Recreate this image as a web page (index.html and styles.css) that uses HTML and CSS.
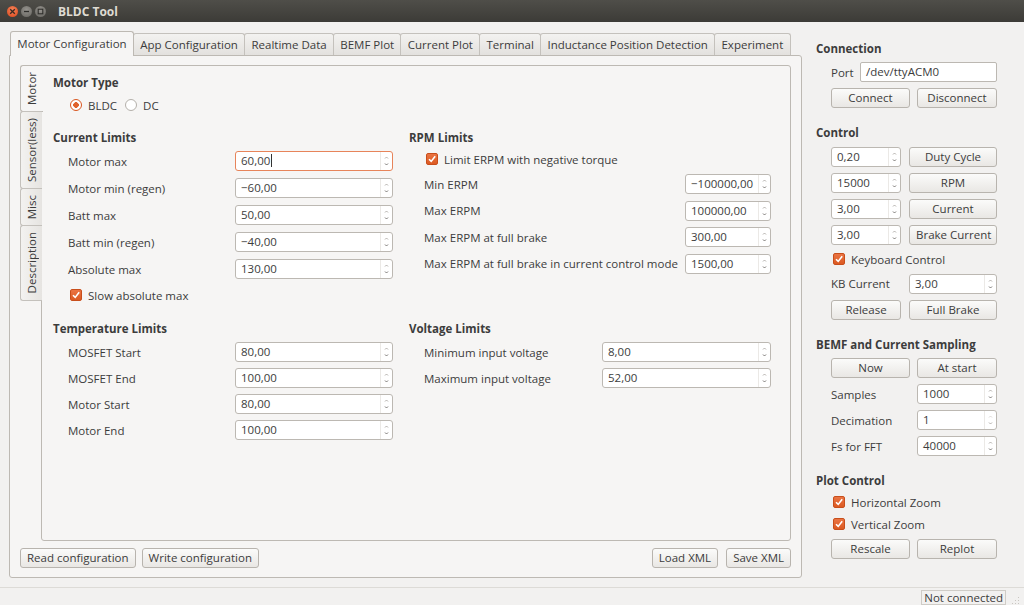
FILE: index.html
```html
<!DOCTYPE html>
<html>
<head>
<meta charset="utf-8">
<title>BLDC Tool</title>
<link rel="stylesheet" href="styles.css">
</head>
<body>
<div class="titlebar">
  <div class="wbtns">
    <span class="wb close"><svg width="7" height="7" viewBox="0 0 7 7"><path d="M1.2 1.2L5.8 5.8M5.8 1.2L1.2 5.8" stroke="#3a2a22" stroke-width="1.3"/></svg></span>
    <span class="wb min"><svg width="7" height="7" viewBox="0 0 7 7"><path d="M1 3.5H6" stroke="#2f2e2b" stroke-width="1.3"/></svg></span>
    <span class="wb max"><svg width="7" height="7" viewBox="0 0 7 7"><rect x="1.2" y="1.2" width="4.6" height="4.6" fill="none" stroke="#2f2e2b" stroke-width="1.1"/></svg></span>
  </div>
  <div class="title">BLDC Tool</div>
</div>

<div class="main">
  <div class="tabwidget">
    <div class="tabbar">
      <div class="tab active">Motor Configuration</div>
      <div class="tab">App Configuration</div>
      <div class="tab">Realtime Data</div>
      <div class="tab">BEMF Plot</div>
      <div class="tab">Current Plot</div>
      <div class="tab">Terminal</div>
      <div class="tab">Inductance Position Detection</div>
      <div class="tab">Experiment</div>
    </div>
    <div class="tabpane">
      <div class="vtabwidget">
        <div class="vtabbar">
          <div class="vtab active"><span>Motor</span></div>
          <div class="vtab"><span>Sensor(less)</span></div>
          <div class="vtab"><span>Misc</span></div>
          <div class="vtab"><span>Description</span></div>
        </div>
        <div class="vpane">
          <div class="heading">Motor Type</div>
          <div class="radios">
            <label class="radio"><span class="rb on"></span>BLDC</label>
            <label class="radio"><span class="rb"></span>DC</label>
          </div>
          <div class="cols">
            <div class="group">
              <div class="heading">Current Limits</div>
              <div class="fields f-current">
                <span class="lbl">Motor max</span>
                <div class="spin focus"><span class="val">60,00<i class="caret"></i></span><span class="arr"><svg width="5" height="14" viewBox="0 0 5 14"><path d="M1 4.5L2.5 3L4 4.5" fill="none" stroke="#a9a6a2" stroke-width="0.9"/><path d="M1 9.5L2.5 11L4 9.5" fill="none" stroke="#6d6a66" stroke-width="0.9"/></svg></span></div>
                <span class="lbl">Motor min (regen)</span>
                <div class="spin"><span class="val">−60,00</span><span class="arr"><svg width="5" height="14" viewBox="0 0 5 14"><path d="M1 4.5L2.5 3L4 4.5" fill="none" stroke="#a9a6a2" stroke-width="0.9"/><path d="M1 9.5L2.5 11L4 9.5" fill="none" stroke="#6d6a66" stroke-width="0.9"/></svg></span></div>
                <span class="lbl">Batt max</span>
                <div class="spin"><span class="val">50,00</span><span class="arr"><svg width="5" height="14" viewBox="0 0 5 14"><path d="M1 4.5L2.5 3L4 4.5" fill="none" stroke="#a9a6a2" stroke-width="0.9"/><path d="M1 9.5L2.5 11L4 9.5" fill="none" stroke="#6d6a66" stroke-width="0.9"/></svg></span></div>
                <span class="lbl">Batt min (regen)</span>
                <div class="spin"><span class="val">−40,00</span><span class="arr"><svg width="5" height="14" viewBox="0 0 5 14"><path d="M1 4.5L2.5 3L4 4.5" fill="none" stroke="#a9a6a2" stroke-width="0.9"/><path d="M1 9.5L2.5 11L4 9.5" fill="none" stroke="#6d6a66" stroke-width="0.9"/></svg></span></div>
                <span class="lbl">Absolute max</span>
                <div class="spin"><span class="val">130,00</span><span class="arr"><svg width="5" height="14" viewBox="0 0 5 14"><path d="M1 4.5L2.5 3L4 4.5" fill="none" stroke="#a9a6a2" stroke-width="0.9"/><path d="M1 9.5L2.5 11L4 9.5" fill="none" stroke="#6d6a66" stroke-width="0.9"/></svg></span></div>
              </div>
              <label class="check cb-slow"><span class="cb"><svg width="10" height="10" viewBox="0 0 10 10"><path d="M2 5.2L4.2 7.4L8.2 2.2" fill="none" stroke="#fff" stroke-width="1.6"/></svg></span>Slow absolute max</label>
            </div>
            <div class="group">
              <div class="heading">RPM Limits</div>
              <label class="check cb-erpm"><span class="cb"><svg width="10" height="10" viewBox="0 0 10 10"><path d="M2 5.2L4.2 7.4L8.2 2.2" fill="none" stroke="#fff" stroke-width="1.6"/></svg></span>Limit ERPM with negative torque</label>
              <div class="fields f-rpm">
                <span class="lbl">Min ERPM</span>
                <div class="spin"><span class="val">−100000,00</span><span class="arr"><svg width="5" height="14" viewBox="0 0 5 14"><path d="M1 4.5L2.5 3L4 4.5" fill="none" stroke="#a9a6a2" stroke-width="0.9"/><path d="M1 9.5L2.5 11L4 9.5" fill="none" stroke="#6d6a66" stroke-width="0.9"/></svg></span></div>
                <span class="lbl">Max ERPM</span>
                <div class="spin"><span class="val">100000,00</span><span class="arr"><svg width="5" height="14" viewBox="0 0 5 14"><path d="M1 4.5L2.5 3L4 4.5" fill="none" stroke="#a9a6a2" stroke-width="0.9"/><path d="M1 9.5L2.5 11L4 9.5" fill="none" stroke="#6d6a66" stroke-width="0.9"/></svg></span></div>
                <span class="lbl">Max ERPM at full brake</span>
                <div class="spin"><span class="val">300,00</span><span class="arr"><svg width="5" height="14" viewBox="0 0 5 14"><path d="M1 4.5L2.5 3L4 4.5" fill="none" stroke="#a9a6a2" stroke-width="0.9"/><path d="M1 9.5L2.5 11L4 9.5" fill="none" stroke="#6d6a66" stroke-width="0.9"/></svg></span></div>
                <span class="lbl">Max ERPM at full brake in current control mode</span>
                <div class="spin"><span class="val">1500,00</span><span class="arr"><svg width="5" height="14" viewBox="0 0 5 14"><path d="M1 4.5L2.5 3L4 4.5" fill="none" stroke="#a9a6a2" stroke-width="0.9"/><path d="M1 9.5L2.5 11L4 9.5" fill="none" stroke="#6d6a66" stroke-width="0.9"/></svg></span></div>
              </div>
            </div>
            <div class="group">
              <div class="heading">Temperature Limits</div>
              <div class="fields f-temp">
                <span class="lbl">MOSFET Start</span>
                <div class="spin"><span class="val">80,00</span><span class="arr"><svg width="5" height="14" viewBox="0 0 5 14"><path d="M1 4.5L2.5 3L4 4.5" fill="none" stroke="#a9a6a2" stroke-width="0.9"/><path d="M1 9.5L2.5 11L4 9.5" fill="none" stroke="#6d6a66" stroke-width="0.9"/></svg></span></div>
                <span class="lbl">MOSFET End</span>
                <div class="spin"><span class="val">100,00</span><span class="arr"><svg width="5" height="14" viewBox="0 0 5 14"><path d="M1 4.5L2.5 3L4 4.5" fill="none" stroke="#a9a6a2" stroke-width="0.9"/><path d="M1 9.5L2.5 11L4 9.5" fill="none" stroke="#6d6a66" stroke-width="0.9"/></svg></span></div>
                <span class="lbl">Motor Start</span>
                <div class="spin"><span class="val">80,00</span><span class="arr"><svg width="5" height="14" viewBox="0 0 5 14"><path d="M1 4.5L2.5 3L4 4.5" fill="none" stroke="#a9a6a2" stroke-width="0.9"/><path d="M1 9.5L2.5 11L4 9.5" fill="none" stroke="#6d6a66" stroke-width="0.9"/></svg></span></div>
                <span class="lbl">Motor End</span>
                <div class="spin"><span class="val">100,00</span><span class="arr"><svg width="5" height="14" viewBox="0 0 5 14"><path d="M1 4.5L2.5 3L4 4.5" fill="none" stroke="#a9a6a2" stroke-width="0.9"/><path d="M1 9.5L2.5 11L4 9.5" fill="none" stroke="#6d6a66" stroke-width="0.9"/></svg></span></div>
              </div>
            </div>
            <div class="group">
              <div class="heading">Voltage Limits</div>
              <div class="fields f-volt">
                <span class="lbl">Minimum input voltage</span>
                <div class="spin"><span class="val">8,00</span><span class="arr"><svg width="5" height="14" viewBox="0 0 5 14"><path d="M1 4.5L2.5 3L4 4.5" fill="none" stroke="#a9a6a2" stroke-width="0.9"/><path d="M1 9.5L2.5 11L4 9.5" fill="none" stroke="#6d6a66" stroke-width="0.9"/></svg></span></div>
                <span class="lbl">Maximum input voltage</span>
                <div class="spin"><span class="val">52,00</span><span class="arr"><svg width="5" height="14" viewBox="0 0 5 14"><path d="M1 4.5L2.5 3L4 4.5" fill="none" stroke="#a9a6a2" stroke-width="0.9"/><path d="M1 9.5L2.5 11L4 9.5" fill="none" stroke="#6d6a66" stroke-width="0.9"/></svg></span></div>
              </div>
            </div>
          </div>
        </div>
      </div>
      <div class="bottombar">
        <div class="btngroup">
          <button class="btn">Read configuration</button>
          <button class="btn">Write configuration</button>
        </div>
        <div class="btngroup">
          <button class="btn">Load XML</button>
          <button class="btn">Save XML</button>
        </div>
      </div>
    </div>
  </div>

  <div class="side">
    <div class="heading">Connection</div>
    <div class="sgroup">
      <div class="portrow">
        <span class="lbl">Port</span>
        <div class="lineedit">/dev/ttyACM0</div>
      </div>
      <div class="pair">
        <button class="btn">Connect</button>
        <button class="btn">Disconnect</button>
      </div>
    </div>

    <div class="heading h-control">Control</div>
    <div class="sgroup ctrl">
      <div class="spin"><span class="val">0,20</span><span class="arr"><svg width="5" height="14" viewBox="0 0 5 14"><path d="M1 4.5L2.5 3L4 4.5" fill="none" stroke="#a9a6a2" stroke-width="0.9"/><path d="M1 9.5L2.5 11L4 9.5" fill="none" stroke="#6d6a66" stroke-width="0.9"/></svg></span></div>
      <button class="btn">Duty Cycle</button>
      <div class="spin"><span class="val">15000</span><span class="arr"><svg width="5" height="14" viewBox="0 0 5 14"><path d="M1 4.5L2.5 3L4 4.5" fill="none" stroke="#a9a6a2" stroke-width="0.9"/><path d="M1 9.5L2.5 11L4 9.5" fill="none" stroke="#6d6a66" stroke-width="0.9"/></svg></span></div>
      <button class="btn">RPM</button>
      <div class="spin"><span class="val">3,00</span><span class="arr"><svg width="5" height="14" viewBox="0 0 5 14"><path d="M1 4.5L2.5 3L4 4.5" fill="none" stroke="#a9a6a2" stroke-width="0.9"/><path d="M1 9.5L2.5 11L4 9.5" fill="none" stroke="#6d6a66" stroke-width="0.9"/></svg></span></div>
      <button class="btn">Current</button>
      <div class="spin"><span class="val">3,00</span><span class="arr"><svg width="5" height="14" viewBox="0 0 5 14"><path d="M1 4.5L2.5 3L4 4.5" fill="none" stroke="#a9a6a2" stroke-width="0.9"/><path d="M1 9.5L2.5 11L4 9.5" fill="none" stroke="#6d6a66" stroke-width="0.9"/></svg></span></div>
      <button class="btn">Brake Current</button>
      <label class="check cb-kb span2"><span class="cb"><svg width="10" height="10" viewBox="0 0 10 10"><path d="M2 5.2L4.2 7.4L8.2 2.2" fill="none" stroke="#fff" stroke-width="1.6"/></svg></span>Keyboard Control</label>
      <span class="lbl kbl">KB Current</span>
      <div class="spin kbspin"><span class="val">3,00</span><span class="arr"><svg width="5" height="14" viewBox="0 0 5 14"><path d="M1 4.5L2.5 3L4 4.5" fill="none" stroke="#a9a6a2" stroke-width="0.9"/><path d="M1 9.5L2.5 11L4 9.5" fill="none" stroke="#6d6a66" stroke-width="0.9"/></svg></span></div>
      <button class="btn">Release</button>
      <button class="btn">Full Brake</button>
    </div>

    <div class="heading h-bemf">BEMF and Current Sampling</div>
    <div class="sgroup samp">
      <button class="btn">Now</button>
      <button class="btn">At start</button>
      <span class="lbl">Samples</span>
      <div class="spin"><span class="val">1000</span><span class="arr"><svg width="5" height="14" viewBox="0 0 5 14"><path d="M1 4.5L2.5 3L4 4.5" fill="none" stroke="#a9a6a2" stroke-width="0.9"/><path d="M1 9.5L2.5 11L4 9.5" fill="none" stroke="#6d6a66" stroke-width="0.9"/></svg></span></div>
      <span class="lbl">Decimation</span>
      <div class="spin"><span class="val">1</span><span class="arr"><svg width="5" height="14" viewBox="0 0 5 14"><path d="M1 4.5L2.5 3L4 4.5" fill="none" stroke="#d6d3cf" stroke-width="0.9"/><path d="M1 9.5L2.5 11L4 9.5" fill="none" stroke="#a9a6a2" stroke-width="0.9"/></svg></span></div>
      <span class="lbl">Fs for FFT</span>
      <div class="spin"><span class="val">40000</span><span class="arr"><svg width="5" height="14" viewBox="0 0 5 14"><path d="M1 4.5L2.5 3L4 4.5" fill="none" stroke="#a9a6a2" stroke-width="0.9"/><path d="M1 9.5L2.5 11L4 9.5" fill="none" stroke="#6d6a66" stroke-width="0.9"/></svg></span></div>
    </div>

    <div class="heading h-plot">Plot Control</div>
    <div class="sgroup plot">
      <label class="check"><span class="cb"><svg width="10" height="10" viewBox="0 0 10 10"><path d="M2 5.2L4.2 7.4L8.2 2.2" fill="none" stroke="#fff" stroke-width="1.6"/></svg></span>Horizontal Zoom</label>
      <label class="check"><span class="cb"><svg width="10" height="10" viewBox="0 0 10 10"><path d="M2 5.2L4.2 7.4L8.2 2.2" fill="none" stroke="#fff" stroke-width="1.6"/></svg></span>Vertical Zoom</label>
      <div class="pair">
        <button class="btn">Rescale</button>
        <button class="btn">Replot</button>
      </div>
    </div>
  </div>
</div>

<div class="statusbar">
  <span class="status">Not connected</span>
  <span class="grip"><svg width="10" height="10" viewBox="0 0 10 10"><g fill="#c9c6c1"><rect x="8" y="2" width="1" height="1"/><rect x="5" y="5" width="1" height="1"/><rect x="8" y="5" width="1" height="1"/><rect x="2" y="8" width="1" height="1"/><rect x="5" y="8" width="1" height="1"/><rect x="8" y="8" width="1" height="1"/></g></svg></span>
</div>
</body>
</html>
```

FILE: styles.css
```css
* { box-sizing: border-box; }
html, body { margin: 0; padding: 0; }
body {
  width: 1024px;
  height: 605px;
  overflow: hidden;
  background: #f2f1f0;
  font-family: "Open Sans", "DejaVu Sans", sans-serif;
  font-size: 11.5px;
  color: #3c3c3c;
}

/* title bar */
.titlebar {
  height: 22px;
  background: linear-gradient(#4f4e49, #3c3b37);
  display: flex;
  align-items: center;
}
.wbtns { display: flex; gap: 3px; margin-left: 7px; margin-top: 1px; }
.wb {
  width: 11px; height: 11px; border-radius: 50%;
  display: flex; align-items: center; justify-content: center;
}
.close { background: radial-gradient(circle at 50% 35%, #f5845a, #d9461a); }
.min, .max { background: radial-gradient(circle at 50% 35%, #96948f, #65635e); }
.title { margin-left: 12px; color: #dfdbd2; font-weight: bold; font-size: 12px; }

/* main */
.main {
  height: 565px;
  display: flex;
  padding-top: 9px;
}
.tabwidget {
  margin-left: 9px;
  width: 793px;
  display: flex;
  flex-direction: column;
}
.tabbar {
  height: 25px;
  display: flex;
  align-items: flex-end;
  padding-left: 1px;
  margin-bottom: -1px;
  position: relative;
  z-index: 2;
}
.tab {
  height: 22px;
  margin-bottom: 1px;
  margin-right: -1px;
  padding: 0 6.3px;
  line-height: 21px;
  border: 1px solid #c4c1bc;
  border-bottom: none;
  border-radius: 3px 3px 0 0;
  background: linear-gradient(#f3f2f0, #e3e1de);
  white-space: nowrap;
}
.tab.active {
  height: 25px;
  margin-bottom: 0;
  line-height: 23px;
  background: #f6f5f4;
  border-color: #bdb9b3;
  position: relative;
  z-index: 3;
}
.tabpane {
  height: 523px;
  border: 1px solid #bdb9b3;
  border-radius: 0 3px 3px 3px;
  background: #f6f5f4;
  padding: 9px 10px 0 10px;
  display: flex;
  flex-direction: column;
}

/* vertical tabs */
.vtabwidget { display: flex; height: 476px; }
.vtabbar {
  width: 22px;
  display: flex;
  flex-direction: column;
  margin-right: -1px;
  position: relative;
  z-index: 2;
}
.vtab {
  width: 22px;
  border: 1px solid #c4c1bc;
  border-right: none;
  border-radius: 3px 0 0 3px;
  background: linear-gradient(90deg, #f3f2f0, #e6e4e1);
  display: flex;
  align-items: center;
  justify-content: center;
  padding: 6px 0;
  margin-bottom: -1px;
}
.vtab span {
  writing-mode: vertical-rl;
  transform: rotate(180deg);
  line-height: 20px;
  white-space: nowrap;
}
.vtab.active {
  width: 23px;
  background: #f6f5f4;
  border-color: #bdb9b3;
}
.vpane {
  flex: 1;
  border: 1px solid #bdb9b3;
  border-radius: 0 3px 3px 3px;
  background: #f6f5f4;
  padding: 9px 0 0 11px;
}

.heading { font-weight: bold; height: 16px; line-height: 16px; white-space: nowrap; }

.radios { display: flex; margin: 6px 0 0 17px; height: 16px; align-items: center; gap: 6px; }
.radio { display: flex; align-items: center; gap: 6px; margin-right: 2px; }
.rb {
  width: 12px; height: 12px; border-radius: 50%;
  border: 1px solid #b4b0aa;
  background: #fff;
  display: inline-block;
}
.rb.on {
  border-color: #d9561f;
  background: radial-gradient(circle, #e0622c 0 2.6px, #fff 3px);
}

.cols {
  display: grid;
  grid-template-columns: 340px 362px;
  column-gap: 16px;
  row-gap: 18px;
  margin-top: 17px;
}
.fields {
  display: grid;
  align-items: center;
  row-gap: 7px;
  margin-top: 5px;
  margin-left: 15px;
}
.f-current { grid-template-columns: 167px 158px; }
.f-rpm { grid-template-columns: 261px 86px; row-gap: 6.5px; margin-top: 7px; }
.f-temp { grid-template-columns: 167px 158px; row-gap: 6px; }
.f-volt { grid-template-columns: 178px 169px; row-gap: 6px; }
.lbl { white-space: nowrap; }

.spin {
  display: flex;
  height: 20px;
  border: 1px solid #bcb8b2;
  border-radius: 3px;
  background: #fff;
  overflow: hidden;
}
.spin .val {
  flex: 1;
  padding-left: 5px;
  line-height: 18px;
  white-space: nowrap;
}
.spin .arr {
  width: 12px;
  border-left: 1px solid #ebe9e6;
  display: flex;
  align-items: center;
  justify-content: center;
}
.spin.focus { border-color: #e7845a; }
.caret {
  display: inline-block;
  width: 1px;
  height: 13px;
  background: #333;
  vertical-align: -2px;
  margin-left: 1px;
}

.check { display: flex; align-items: center; height: 16px; gap: 6px; white-space: nowrap; }
.cb {
  width: 12px; height: 12px;
  border-radius: 2px;
  background: linear-gradient(#ea7443, #dc5a22);
  border: 1px solid #c84e1b;
  display: flex; align-items: center; justify-content: center;
}
.cb-slow { margin: 8px 0 0 17px; }
.cb-erpm { margin: 5px 0 0 17px; }

/* bottom buttons */
.bottombar {
  display: flex;
  justify-content: space-between;
  margin-top: 7px;
}
.btngroup { display: flex; gap: 6px; }
.btngroup + .btngroup { gap: 8px; }
.btn {
  height: 20px;
  border: 1px solid #b8b4ae;
  border-radius: 3px;
  background: linear-gradient(#fbfbfa, #e9e7e4);
  font-family: inherit;
  font-size: 11.5px;
  color: #3c3c3c;
  padding: 0 6px;
  line-height: 18px;
  white-space: nowrap;
}

/* side panel */
.side {
  width: 181px;
  margin-left: 14px;
  padding-top: 10px;
}
.sgroup { margin-left: 15px; }
.portrow { display: flex; align-items: center; margin-top: 5px; height: 20px; }
.portrow .lbl { width: 29px; }
.lineedit {
  flex: 1;
  height: 20px;
  border: 1px solid #bcb8b2;
  border-radius: 2px;
  background: #fff;
  padding-left: 5px;
  line-height: 18px;
}
.pair { display: grid; grid-template-columns: 79px 80px; column-gap: 7px; margin-top: 6px; }
.h-control { margin-top: 17px; }
.ctrl {
  display: grid;
  grid-template-columns: 70px 88px;
  column-gap: 8px;
  row-gap: 6px;
  margin-top: 6px;
  align-items: center;
}
.span2 { grid-column: 1 / 3; margin-left: 2px; }
.kbspin { margin-top: 1px; }
.h-bemf { margin-top: 17px; }
.samp {
  display: grid;
  grid-template-columns: 79px 80px;
  column-gap: 7px;
  row-gap: 6px;
  margin-top: 5px;
  align-items: center;
}
.h-plot { margin-top: 17px; }
.plot { display: flex; flex-direction: column; gap: 6px; margin-top: 5px; }
.plot .check { margin-left: 2px; }
.plot .pair { margin-top: 1px; }

/* status bar */
.statusbar {
  height: 18px;
  border-top: 1px solid #dddbd7;
  display: flex;
  justify-content: flex-end;
  align-items: center;
}
.status {
  height: 15px;
  line-height: 13px;
  padding: 0 2px;
  border: 1px solid #cfccc7;
  margin-top: 1px;
  white-space: nowrap;
}
.grip { width: 18px; height: 17px; display: flex; align-items: flex-end; justify-content: center; }
```
